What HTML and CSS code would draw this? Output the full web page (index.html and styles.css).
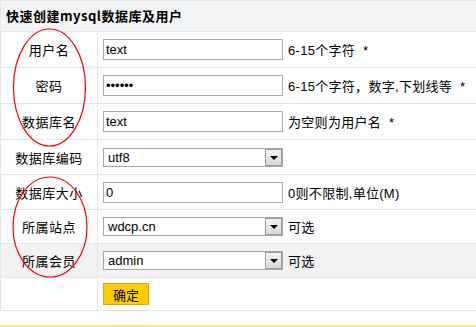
FILE: index.html
```html
<!DOCTYPE html>
<html lang="zh-CN">
<head>
<meta charset="utf-8">
<title>快速创建mysql数据库及用户</title>
<link rel="stylesheet" href="styles.css">
</head>
<body>
<div class="page">
  <form class="panel">
    <div class="head">快速创建mysql数据库及用户</div>
    <div class="row r1">
      <div class="label">用户名</div>
      <div class="value"><input class="txt" type="text" value="text"><span class="tip">6-15个字符&nbsp; *</span></div>
    </div>
    <div class="row r2">
      <div class="label">密码</div>
      <div class="value"><input class="txt" type="password" value="123456"><span class="tip">6-15个字符，数字,下划线等&nbsp; *</span></div>
    </div>
    <div class="row r3">
      <div class="label">数据库名</div>
      <div class="value"><input class="txt" type="text" value="text"><span class="tip">为空则为用户名&nbsp; *</span></div>
    </div>
    <div class="row r4">
      <div class="label">数据库编码</div>
      <div class="value"><span class="sel"><select><option>utf8</option></select><span class="arrow"></span></span></div>
    </div>
    <div class="row r5">
      <div class="label">数据库大小</div>
      <div class="value"><input class="txt" type="text" value="0"><span class="tip">0则不限制,单位(M)</span></div>
    </div>
    <div class="row r6">
      <div class="label">所属站点</div>
      <div class="value"><span class="sel"><select><option>wdcp.cn</option></select><span class="arrow"></span></span><span class="tip">可选</span></div>
    </div>
    <div class="row r7 hover">
      <div class="label">所属会员</div>
      <div class="value"><span class="sel"><select><option>admin</option></select><span class="arrow"></span></span><span class="tip">可选</span></div>
    </div>
    <div class="row r8">
      <div class="label"></div>
      <div class="value"><button class="btn" type="button">确定</button></div>
    </div>
  </form>
  <div class="next"></div>
  <svg class="marks" width="476" height="327" viewBox="0 0 476 327">
    <ellipse cx="49.5" cy="87.5" rx="36" ry="58.5" fill="none" stroke="#ff0000" stroke-width="1.2"/>
    <ellipse cx="50" cy="227" rx="37" ry="50" fill="none" stroke="#ff0000" stroke-width="1.2"/>
  </svg>
</div>
</body>
</html>
```
FILE: styles.css
```css
html, body {
  margin: 0;
  padding: 0;
  background: #fff;
}
body {
  font-family: "Liberation Sans", "Noto Sans CJK SC", sans-serif;
  font-size: 13px;
  color: #000;
}
.page {
  position: relative;
  width: 476px;
  height: 327px;
  overflow: hidden;
}
.panel {
  margin: 0;
  border-top: 1px solid #e3e6ea;
  border-left: 1px solid #e3e6ea;
}
.head {
  height: 30px;
  line-height: 30px;
  padding-left: 5px;
  background: #f2f3f5;
  border-bottom: 1px solid #e3e6ea;
  font-weight: bold;
  font-size: 13px;
  letter-spacing: 0.5px;
  font-family: "Noto Sans CJK SC", sans-serif;
}
.row {
  display: flex;
  border-bottom: 1px solid #e3e6ea;
}
.r1, .r2, .r3 { height: 35px; }
.r4, .r5 { height: 34px; }
.r6, .r7 { height: 33px; }
.r8 { height: 32px; }
.hover { background: #f2f2f2; }
.label {
  width: 96px;
  border-right: 1px solid #e3e6ea;
  display: flex;
  align-items: center;
  justify-content: center;
  font-family: "Noto Sans CJK SC", sans-serif;
  letter-spacing: 0.5px;
}
.value {
  flex: 1;
  display: flex;
  align-items: center;
  padding-left: 5px;
}
.txt {
  box-sizing: border-box;
  width: 180px;
  height: 21px;
  margin: 0;
  padding: 0 2px;
  border: 1px solid #a9a9a9;
  font-family: "Liberation Sans", sans-serif;
  font-size: 13px;
  color: #000;
  background: #fff;
  outline: none;
}
.tip {
  margin-left: 5px;
  font-family: "Liberation Sans", "Noto Sans CJK SC", sans-serif;
  letter-spacing: 0.3px;
}
.sel {
  box-sizing: border-box;
  display: inline-flex;
  align-items: center;
  width: 180px;
  height: 19px;
  border: 1px solid #a5a5a5;
  background: #fff;
}
.sel select {
  -webkit-appearance: none;
  appearance: none;
  flex: 1;
  min-width: 0;
  height: 17px;
  border: 0;
  margin: 0;
  padding: 0 0 0 4px;
  background: transparent;
  font-family: "Liberation Sans", sans-serif;
  font-size: 13px;
  color: #000;
  outline: none;
}
.arrow {
  box-sizing: border-box;
  position: relative;
  width: 17px;
  height: 17px;
  border: 1px solid #9c9c9c;
  background: linear-gradient(#f4f4f4, #d8d8d8);
  display: flex;
  align-items: center;
  justify-content: center;
}
.arrow::after {
  content: "";
  width: 0;
  height: 0;
  border-left: 4px solid transparent;
  border-right: 4px solid transparent;
  border-top: 4px solid #000;
  margin-top: 1px;
}
.btn {
  box-sizing: border-box;
  width: 46px;
  height: 22px;
  margin: 0;
  padding: 0;
  border: 1px solid #ff9900;
  background: #ffcc00;
  font-family: "Noto Sans CJK SC", sans-serif;
  font-size: 13px;
  color: #000;
}
.next {
  margin-top: 14px;
  height: 10px;
  border-top: 2px solid #fde38c;
  background: #fffbea;
}
.marks {
  position: absolute;
  left: 0;
  top: 0;
  pointer-events: none;
}
```
